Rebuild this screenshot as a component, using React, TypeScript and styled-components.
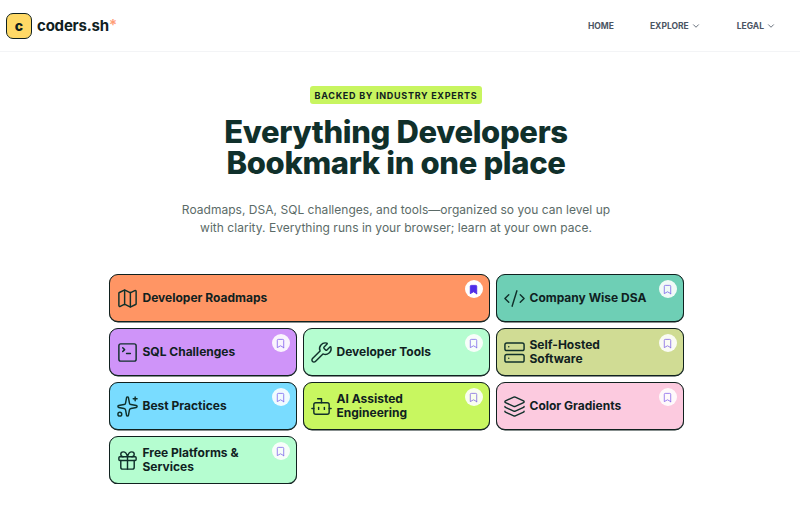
import React from 'react'
import styled, { createGlobalStyle } from 'styled-components'
import {
  Map,
  SquareTerminal,
  Wrench,
  CodeXml,
  Server,
  Sparkles,
  Bot,
  Layers,
  Gift,
  Bookmark,
  ChevronDown,
} from 'lucide-react'

const GlobalStyle = createGlobalStyle`
  html, body {
    margin: 0;
    padding: 0;
    background: #fff;
    font-family: Inter, "Liberation Sans", sans-serif;
  }
`

const Page = styled.div`
  width: 792px;
`

const Header = styled.header`
  height: 52px;
  box-sizing: border-box;
  border-bottom: 1px solid #f3f4f6;
  margin-right: -8px;
  display: flex;
  align-items: center;
  justify-content: space-between;
  padding: 0 24px 0 6px;
`

const Brand = styled.div`
  display: flex;
  align-items: center;
  gap: 5px;
`

const LogoMark = styled.div`
  width: 26px;
  height: 26px;
  box-sizing: border-box;
  border: 1.5px solid #10211f;
  border-radius: 7px;
  background: #ffd966;
  color: #10211f;
  display: flex;
  align-items: center;
  justify-content: center;
  font-size: 14px;
  font-weight: 800;
`

const BrandName = styled.div`
  font-size: 15px;
  font-weight: 700;
  letter-spacing: -0.2px;
  color: #10211f;

  sup {
    color: #ff9c75;
    font-size: 15px;
    font-weight: 600;
    line-height: 0;
    vertical-align: 1px;
  }
`

const Nav = styled.nav`
  display: flex;
  align-items: center;
  gap: 36px;
`

const NavItem = styled.div`
  display: flex;
  align-items: center;
  gap: 2px;
  font-size: 8.5px;
  font-weight: 700;
  color: #4b5563;
`

const Hero = styled.section`
  display: flex;
  flex-direction: column;
  align-items: center;
  padding-top: 34px;
`

const Badge = styled.div`
  height: 18px;
  width: 172px;
  display: flex;
  align-items: center;
  justify-content: center;
  border-radius: 3px;
  background: #c8f560;
  color: #10211f;
  font-size: 9px;
  font-weight: 700;
  letter-spacing: 0.72px;
  white-space: nowrap;
`

const Title = styled.h1`
  margin: 12px 0 0;
  font-size: 31px;
  line-height: 31px;
  font-weight: 800;
  letter-spacing: -0.35px;
  color: #10302b;
  text-align: center;
`

const Subtitle = styled.p`
  margin: 23px 0 0;
  font-size: 12px;
  line-height: 18px;
  letter-spacing: 0.03px;
  color: #5b6b68;
  text-align: center;
`

const Cards = styled.div`
  display: grid;
  grid-template-columns: 188px 187px 188px;
  grid-auto-rows: 48px;
  gap: 6px;
  width: 575px;
  margin: 37px auto 0;
`

const Card = styled.a<{ $bg: string; $wide?: boolean }>`
  position: relative;
  grid-column: ${({ $wide }) => ($wide ? 'span 2' : 'auto')};
  display: flex;
  align-items: center;
  gap: 4px;
  box-sizing: border-box;
  padding: 0 34px 0 6px;
  border: 1px solid #10211f;
  border-radius: 9px;
  box-shadow: 0 0.5px 0 #10211f;
  background: ${({ $bg }) => $bg};
`

const IconSlot = styled.div`
  width: 23px;
  height: 23px;
  flex: none;
  color: #10302b;

  svg {
    display: block;
    width: 23px;
    height: 23px;
  }
`

const Label = styled.div`
  font-size: 12px;
  line-height: 14px;
  font-weight: 700;
  color: #10211f;
`

const Mark = styled.div<{ $on?: boolean }>`
  position: absolute;
  top: 5px;
  right: 6px;
  width: 18px;
  height: 18px;
  border-radius: 50%;
  background: #fff;
  opacity: ${({ $on }) => ($on ? 1 : 0.9)};
  display: flex;
  align-items: center;
  justify-content: center;
  color: ${({ $on }) => ($on ? '#4f2ee8' : '#8b6ff0')};
`

const cards = [
  { label: 'Developer Roadmaps', icon: Map, bg: '#ff9564', wide: true, on: true },
  { label: 'Company Wise DSA', icon: CodeXml, bg: '#6ecfb5' },
  { label: 'SQL Challenges', icon: SquareTerminal, bg: '#cf94f9' },
  { label: 'Developer Tools', icon: Wrench, bg: '#b5fdd0' },
  { label: 'Self-Hosted Software', icon: Server, bg: '#d0dc94' },
  { label: 'Best Practices', icon: Sparkles, bg: '#79dcff' },
  { label: 'AI Assisted Engineering', icon: Bot, bg: '#c8f760' },
  { label: 'Color Gradients', icon: Layers, bg: '#fccadf' },
  { label: 'Free Platforms & Services', icon: Gift, bg: '#b5fdd0' },
]

const App: React.FC = () => (
  <Page>
    <GlobalStyle />
    <Header>
      <Brand>
        <LogoMark>c</LogoMark>
        <BrandName>
          coders.sh<sup>*</sup>
        </BrandName>
      </Brand>
      <Nav>
        <NavItem>HOME</NavItem>
        <NavItem>
          EXPLORE <ChevronDown size={10} />
        </NavItem>
        <NavItem>
          LEGAL <ChevronDown size={10} />
        </NavItem>
      </Nav>
    </Header>
    <Hero>
      <Badge>BACKED BY INDUSTRY EXPERTS</Badge>
      <Title>
        Everything Developers
        <br />
        Bookmark in one place
      </Title>
      <Subtitle>
        Roadmaps, DSA, SQL challenges, and tools—organized so you can level up
        <br />
        with clarity. Everything runs in your browser; learn at your own pace.
      </Subtitle>
    </Hero>
    <Cards>
      {cards.map(({ label, icon: Icon, bg, wide, on }) => (
        <Card key={label} $bg={bg} $wide={wide}>
          <IconSlot>
            <Icon strokeWidth={1.5} />
          </IconSlot>
          <Label>{label}</Label>
          <Mark $on={on}>
            <Bookmark size={11} strokeWidth={2} fill={on ? 'currentColor' : 'none'} />
          </Mark>
        </Card>
      ))}
    </Cards>
  </Page>
)

export default App
